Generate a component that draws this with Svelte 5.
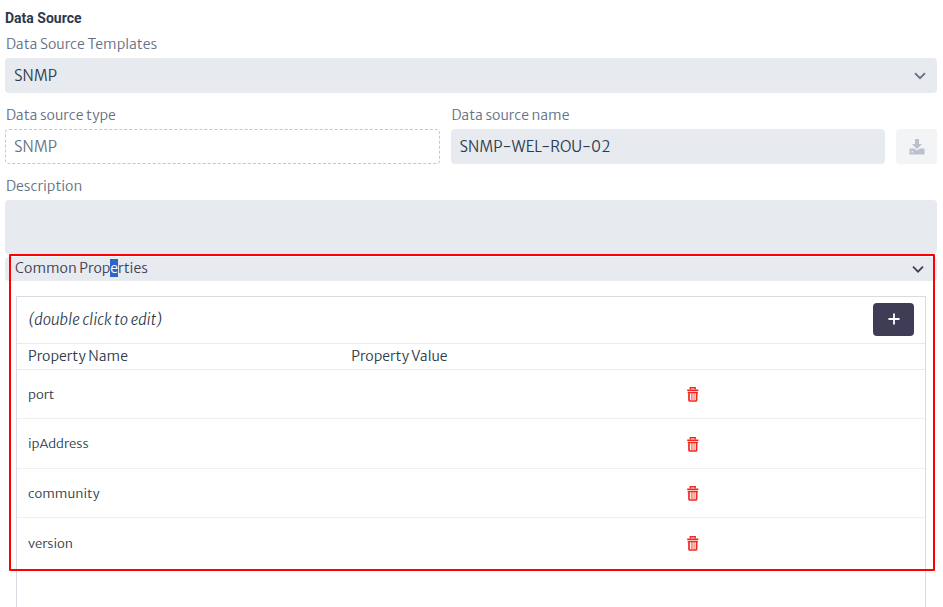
<script>
  let template = $state('SNMP');
  let sourceName = $state('SNMP-WEL-ROU-02');
  let description = $state('');
  let open = $state(true);
  let properties = $state(['port', 'ipAddress', 'community', 'version']);

  function add() {
    properties.push('property');
  }

  function remove(index) {
    properties.splice(index, 1);
  }
</script>

<main>
  <h1>Data Source</h1>

  <div class="field">
    <label for="template">Data Source Templates</label>
    <div class="select">
      <select id="template" bind:value={template}>
        <option>SNMP</option>
      </select>
      <svg class="chevron" viewBox="0 0 12 8" aria-hidden="true"><path d="M1 1.2 6 6.2 11 1.2" /></svg>
    </div>
  </div>

  <div class="row">
    <div class="field">
      <label for="type">Data source type</label>
      <input id="type" class="locked" value="SNMP" readonly />
    </div>
    <div class="field">
      <label for="name">Data source name</label>
      <input id="name" bind:value={sourceName} />
    </div>
    <button class="download" aria-label="Save data source" disabled>
      <svg viewBox="0 0 16 16" aria-hidden="true">
        <path d="M6 0h4v5h3L8 10 3 5h3z" />
        <path fill-rule="evenodd" d="M.5 9.500H5l3 2 3-2h4.500V15.500H.5zM2.500 12v1.500H4V12z" />
      </svg>
    </button>
  </div>

  <div class="field">
    <label for="description">Description</label>
    <textarea id="description" bind:value={description}></textarea>
  </div>

  <button class="accordion" aria-expanded={open} onclick={() => (open = !open)}>
    <span>Common Prop<span class="selected">e</span>rties</span>
    <svg class="chevron" viewBox="0 0 12 8" aria-hidden="true"><path d="M1 1.7 6 6.7 11 1.7" /></svg>
  </button>

  {#if open}
    <section class="panel">
      <div class="outlined">
        <div class="toolbar">
          <em>(double click to edit)</em>
          <button class="add" aria-label="Add property" onclick={add}>
            <svg viewBox="0 0 12 12" aria-hidden="true"><path d="M6 .5v11M.5 6h11" /></svg>
          </button>
        </div>
        <table>
          <thead>
            <tr>
              <th class="name">Property Name</th>
              <th class="value">Property Value</th>
              <th aria-label="Actions"></th>
            </tr>
          </thead>
          <tbody>
            {#each properties as property, index}
              <tr>
                <td>{property}</td>
                <td></td>
                <td>
                  <button class="remove" aria-label="Delete {property}" onclick={() => remove(index)}>
                    <svg viewBox="0 0 12 16" aria-hidden="true">
                      <path d="M3.300 3.500V1.700H8.200V3.500" />
                      <path class="lid" d="M.2 4.300h11.200M.7 6.500h10.200" />
                      <path class="can" d="M2 6.500v7.500q0 1 1 1h5.600q1 0 1-1V6.500" />
                      <path class="ribs" d="M4.400 7v7M5.800 7v7M7.200 7v7" />
                    </svg>
                  </button>
                </td>
              </tr>
            {/each}
          </tbody>
        </table>
      </div>
    </section>
  {/if}
</main>

<style>
  :global(body) {
    margin: 0;
    background: #fff;
  }

  main {
    box-sizing: border-box;
    display: flex;
    flex-direction: column;
    min-height: 100vh;
    padding: 8px 6px 0 5px;
    color: #2c3a4b;
    font-family: 'Merriweather Sans', 'Open Sans', 'Noto Sans', sans-serif;
    font-size: 14px;
    font-weight: 300;
  }

  h1 {
    margin: 0 0 6px;
    font: 700 14px/20px Roboto, sans-serif;
  }

  button,
  input,
  select,
  textarea {
    box-sizing: border-box;
    margin: 0;
    border: 0;
    font: inherit;
    color: inherit;
  }

  .field {
    display: flex;
    flex: none;
    flex-direction: column;
    margin-bottom: 12px;
  }

  label {
    padding-left: 1px;
    line-height: 20px;
    margin-bottom: 4px;
    color: #647184;
  }

  input,
  select,
  textarea {
    width: 100%;
    height: 35px;
    padding: 0 9px;
    border-radius: 4px;
    background: #e7eaef;
    font-size: 15px;
  }

  .select {
    position: relative;
  }

  select {
    appearance: none;
  }

  .chevron {
    width: 12px;
    height: 8px;
    fill: none;
    stroke: currentColor;
    stroke-width: 1.8;
  }

  .select .chevron {
    position: absolute;
    top: 14px;
    right: 11px;
    color: #647184;
    pointer-events: none;
  }

  .row {
    display: flex;
    align-items: flex-start;
    gap: 11px;
  }

  .row .field {
    flex: 1;
  }

  .locked {
    padding: 0 8px;
    border: 1px dashed #c3c7cc;
    background: #fff;
    color: #647184;
  }

  .download {
    width: 41px;
    height: 35px;
    margin-top: 24px;
    padding: 0;
    border-radius: 4px;
    background: #f3f4f6;
    color: #b8c1cc;
  }

  .download svg {
    display: block;
    width: 16px;
    height: 16px;
    margin: auto;
    fill: currentColor;
  }

  textarea {
    display: block;
    height: 54px;
    padding: 8px 9px;
    resize: none;
  }

  .field:has(textarea) {
    margin-bottom: 3px;
  }

  .accordion {
    display: flex;
    flex: none;
    align-items: center;
    justify-content: space-between;
    height: 24px;
    padding: 0 13px 2px 10px;
    border-radius: 4px;
    background: #e7eaef;
    color: #3f3d56;
    line-height: 18px;
  }

  .accordion .chevron {
    padding-top: 2px;
  }

  .selected {
    background: #2f65ca;
    color: #fff;
  }

  .panel {
    flex: 1;
    margin: 15px 11px 0;
    border: 1px solid #d9dbe3;
    border-bottom: 0;
  }

  .outlined {
    position: relative;
  }

  .outlined::after {
    content: '';
    position: absolute;
    inset: -43px -10px -3px -8px;
    border: 2px solid #f00;
    border-radius: 1px;
    pointer-events: none;
  }

  .toolbar {
    box-sizing: border-box;
    display: flex;
    align-items: center;
    justify-content: space-between;
    height: 47px;
    padding: 0 11px 2px;
    border-bottom: 1px solid #e7eaef;
  }

  .toolbar em {
    font-size: 15px;
  }

  .add {
    width: 41px;
    height: 33px;
    padding: 0;
    border-radius: 4px;
    background: #3f3d56;
    color: #fff;
  }

  .add svg {
    display: block;
    width: 12px;
    height: 12px;
    margin: auto;
    fill: none;
    stroke: currentColor;
    stroke-width: 1.8;
  }

  table {
    width: 100%;
    border-collapse: separate;
    border-spacing: 0;
    table-layout: fixed;
  }

  th,
  td {
    box-sizing: border-box;
    padding: 0 11px;
    border-bottom: 1px solid #e7eaef;
    text-align: left;
  }

  th {
    height: 26px;
    padding-bottom: 2px;
    font-weight: 300;
    line-height: 20px;
  }

  .name {
    width: 35.6%;
  }

  .value {
    width: 37%;
  }

  td {
    height: 49px;
    border-color: #eef0f2;
    font-size: 13px;
  }

  tr:nth-child(even) td {
    height: 50px;
  }

  tr:last-child td {
    border-bottom: 0;
  }

  .remove {
    display: block;
    padding: 0;
    background: none;
    color: #f3261c;
  }

  .remove svg {
    display: block;
    width: 12px;
    height: 16px;
    fill: none;
    stroke: currentColor;
    stroke-width: 1.4;
  }

  .remove .lid {
    stroke-width: 1.4;
  }

  .remove .can {
    stroke-width: 1.7;
  }

  .remove .ribs {
    stroke-width: 0.6;
  }
</style>
